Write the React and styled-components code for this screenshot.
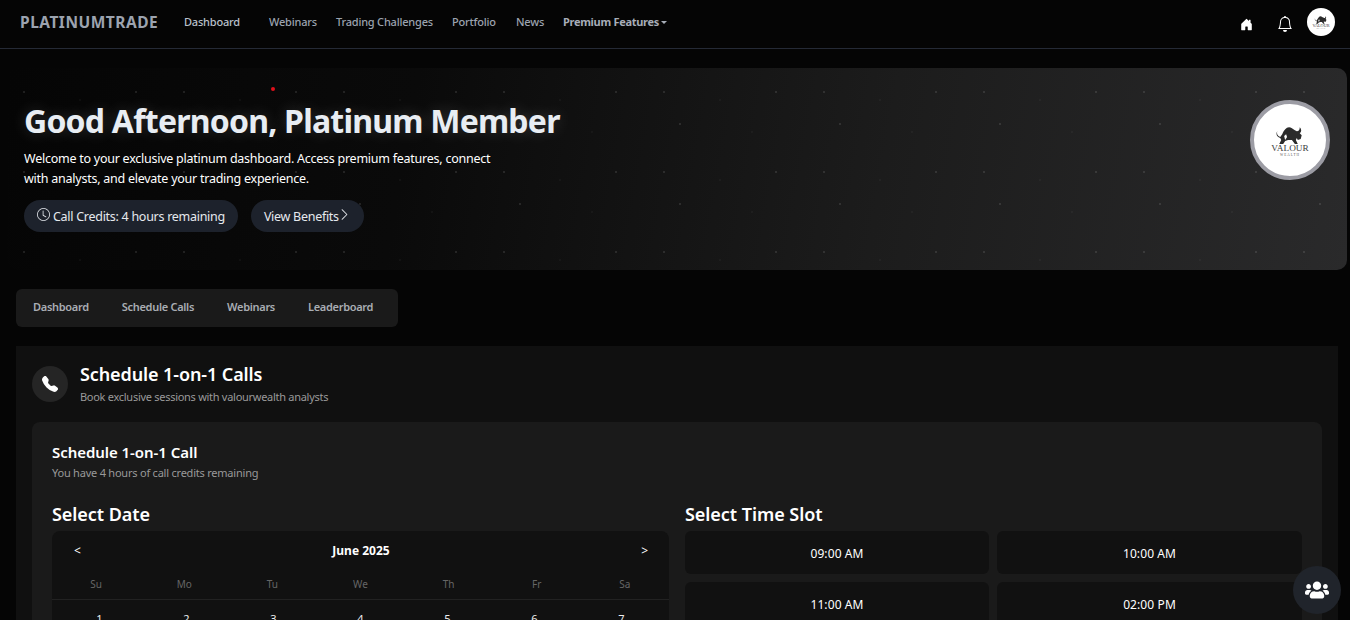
import styled, { createGlobalStyle } from "styled-components";
import { BsHouseDoorFill, BsBell, BsClock, BsChevronRight, BsTelephoneFill } from "react-icons/bs";
import { FaUsers } from "react-icons/fa";

const navLinks = [
  { label: "Dashboard", width: 85, active: true },
  { label: "Webinars", width: 67 },
  { label: "Trading Challenges", width: 116 },
  { label: "Portfolio", width: 64 },
  { label: "News", width: 47 },
];

const tabs = ["Dashboard", "Schedule Calls", "Webinars", "Leaderboard"];
const weekdays = ["Su", "Mo", "Tu", "We", "Th", "Fr", "Sa"];
const days = Array.from({ length: 14 }, (_, i) => i + 1);
const slots = ["09:00 AM", "10:00 AM", "11:00 AM", "02:00 PM"];

// bull + wordmark, used big in the hero and small in the navbar
const BullLogo = ({ size }) => (
  <svg width={size} height={size} viewBox="0 0 80 80" style={{ flex: "none" }}>
    <path
      fill="#2b2b2b"
      d="M27 31C26 33 27 36 30 37L32 34C34 30 36 27 39 27C41 27 43 29 45 30L47 31C49 31 50 30 50 27C52 29 52 32 50 33L52 35L51 39L48 40L47 38L46 40L48 44L45 44L42 40L38 40L35 41L33 44L29 44L31 40L30 38C27 37 25 34 27 31Z"
    />
    <path fill="#fff" d="M34 36l2-2 1 3-2 3z" />
    <text x="40" y="51.5" textAnchor="middle" fontFamily="Liberation Serif, serif" fontSize="9.5" fill="#3a3a3a">
      VALOUR
    </text>
    <text x="40" y="56" textAnchor="middle" fontFamily="Liberation Serif, serif" fontSize="3.5" letterSpacing="1" fill="#555">
      WEALTH
    </text>
  </svg>
);

const App = () => {
  return (
    <Page>
      <GlobalStyle />
      <Navbar>
        <Brand>PLATINUMTRADE</Brand>
        <NavLinks>
          {navLinks.map((link) => (
            <NavLink key={link.label} $width={link.width} $active={link.active}>
              {link.label}
            </NavLink>
          ))}
          <PremiumLink>Premium Features</PremiumLink>
        </NavLinks>
        <NavIcons>
          <HomeIcon><BsHouseDoorFill /></HomeIcon>
          <BellIcon><BsBell /></BellIcon>
          <Avatar><BullLogo size={36} /></Avatar>
        </NavIcons>
      </Navbar>

      <Hero>
        <RedDot />
        <HeroText>
          <HeroTitle>Good Afternoon, Platinum Member</HeroTitle>
          <HeroLead>
            Welcome to your exclusive platinum dashboard. Access premium features, connect with analysts, and elevate your trading experience.
          </HeroLead>
          <HeroActions>
            <Pill>
              <BsClock />
              <span>Call Credits: 4 hours remaining</span>
            </Pill>
            <Pill>
              <span>View Benefits</span>
              <BsChevronRight />
            </Pill>
          </HeroActions>
        </HeroText>
        <HeroLogo><BullLogo size={78} /></HeroLogo>
      </Hero>

      <Tabs>
        {tabs.map((tab) => (
          <Tab key={tab}>{tab}</Tab>
        ))}
      </Tabs>

      <Section>
        <SectionHead>
          <PhoneBadge><BsTelephoneFill /></PhoneBadge>
          <div>
            <SectionTitle>Schedule 1-on-1 Calls</SectionTitle>
            <SectionSub>Book exclusive sessions with valourwealth analysts</SectionSub>
          </div>
        </SectionHead>

        <Card>
          <CardTitle>Schedule 1-on-1 Call</CardTitle>
          <CardSub>You have 4 hours of call credits remaining</CardSub>
          <Columns>
            <div>
              <ColumnTitle>Select Date</ColumnTitle>
              <Calendar>
                <CalendarHead>
                  <MonthArrow>&lt;</MonthArrow>
                  <MonthName>June 2025</MonthName>
                  <MonthArrow>&gt;</MonthArrow>
                </CalendarHead>
                <Weekdays>
                  {weekdays.map((d) => (
                    <Weekday key={d}>{d}</Weekday>
                  ))}
                </Weekdays>
                <Days>
                  {days.map((d) => (
                    <Day key={d}>{d}</Day>
                  ))}
                </Days>
              </Calendar>
            </div>
            <div>
              <ColumnTitle>Select Time Slot</ColumnTitle>
              <Slots>
                {slots.map((s) => (
                  <Slot key={s}>{s}</Slot>
                ))}
              </Slots>
            </div>
          </Columns>
        </Card>
      </Section>

      <ChatButton><FaUsers /></ChatButton>
    </Page>
  );
};

export default App;

const GlobalStyle = createGlobalStyle`
  html, body {
    margin: 0;
    height: 620px;
    overflow: hidden;
    background: #050505;
  }
  * {
    box-sizing: border-box;
  }
`;

const Page = styled.div`
  font-family: "Noto Sans", "Open Sans", sans-serif;
  color: #fff;
  height: 620px;
  overflow: hidden;
`;

const Navbar = styled.nav`
  display: flex;
  align-items: center;
  height: 49px;
  padding: 0 15px 5px 20px;
  background: #050505;
  border-bottom: 1px solid #252a36;
`;

const Brand = styled.div`
  width: 164px;
  font-size: 15.5px;
  font-weight: 700;
  letter-spacing: 0.5px;
  color: #9ca3af;
`;

const NavLinks = styled.div`
  display: flex;
  align-items: center;
`;

const NavLink = styled.a`
  width: ${(props) => props.$width}px;
  font-size: 11px;
  font-weight: 500;
  letter-spacing: -0.2px;
  color: ${(props) => (props.$active ? "#b9c0cb" : "#9ca3af")};
`;

const PremiumLink = styled.a`
  font-size: 11px;
  font-weight: 700;
  letter-spacing: -0.3px;
  color: #a7adb8;

  &::after {
    content: "";
    display: inline-block;
    margin-left: 2px;
    vertical-align: 2px;
    border-top: 3px solid #a7adb8;
    border-left: 3px solid transparent;
    border-right: 3px solid transparent;
  }
`;

const NavIcons = styled.div`
  display: flex;
  align-items: center;
  margin-left: auto;
`;

const HomeIcon = styled.span`
  display: flex;
  margin-top: 6px;
  margin-right: 24px;
  font-size: 13px;
  color: #fff;
`;

const BellIcon = styled.span`
  display: flex;
  margin-top: 5px;
  margin-right: 14px;
  font-size: 16px;
  color: #fff;
`;

const Avatar = styled.div`
  display: flex;
  align-items: center;
  justify-content: center;
  width: 28px;
  height: 28px;
  border-radius: 50%;
  background: #fff;
  overflow: hidden;
`;

const Hero = styled.section`
  position: relative;
  display: flex;
  justify-content: space-between;
  height: 202px;
  margin: 19px 3px 0 7px;
  padding: 32px 17px 0 17px;
  border-radius: 10px;
  background-color: #0a0a0a;
  background-image:
    radial-gradient(circle at 16px 24px, rgba(255, 255, 255, 0.1) 0.9px, transparent 1px),
    radial-gradient(circle at 128px 24px, rgba(255, 255, 255, 0.1) 0.9px, transparent 1px),
    radial-gradient(circle at 32px 56px, rgba(255, 255, 255, 0.1) 0.9px, transparent 1px),
    radial-gradient(circle at 72px 32px, rgba(255, 255, 255, 0.03) 0.9px, transparent 1px),
    radial-gradient(circle at 104px 64px, rgba(255, 255, 255, 0.03) 0.9px, transparent 1px),
    linear-gradient(100deg, #050505 0%, #0a0a0a 30%, #1c1c1c 65%, #2a2a2b 100%);
  background-size: 160px 80px, 160px 80px, 160px 80px, 160px 80px, 160px 80px, 100% 100%;
  background-position: 1px 0, 1px 0, 1px 0, 1px 0, 1px 0, 0 0;
`;

const RedDot = styled.span`
  position: absolute;
  left: 264px;
  top: 19px;
  width: 4px;
  height: 4px;
  border-radius: 50%;
  background: #e0101a;
`;

const HeroText = styled.div`
  width: 540px;
`;

const HeroTitle = styled.h1`
  margin: 0;
  font-size: 32px;
  line-height: 42px;
  font-weight: 700;
  letter-spacing: -0.78px;
  color: #e8edf3;
  text-shadow: 0 0 16px rgba(255, 255, 255, 0.18);
  white-space: nowrap;
`;

const HeroLead = styled.p`
  width: 480px;
  margin: 7px 0 0;
  font-size: 12.5px;
  line-height: 20px;
  letter-spacing: -0.25px;
  color: #fff;
`;

const HeroActions = styled.div`
  display: flex;
  gap: 13px;
  margin-top: 11px;
`;

const Pill = styled.div`
  display: flex;
  align-items: center;
  gap: 3px;
  height: 32px;
  padding: 0 13px;
  border-radius: 16px;
  background: #1d222c;
  font-size: 12.5px;
  letter-spacing: -0.28px;
  color: #e6e9ee;

  svg {
    margin-top: -3px;
    font-size: 13px;
  }

  span + svg {
    margin-left: -4px;
  }
`;

const HeroLogo = styled.div`
  display: flex;
  align-items: center;
  justify-content: center;
  align-self: flex-start;
  width: 80px;
  height: 80px;
  border: 4px solid #9c9ca4;
  border-radius: 50%;
  background: #fff;
`;

const Tabs = styled.div`
  display: flex;
  width: 382px;
  height: 38px;
  margin: 19px 0 0 16px;
  padding: 0 0 3px 17px;
  align-items: center;
  border-radius: 6px;
  background: #1a1a1a;
`;

const Tab = styled.div`
  margin-right: 33px;
  font-size: 11px;
  font-weight: 600;
  letter-spacing: -0.3px;
  white-space: nowrap;
  color: #a9adb3;
`;

const Section = styled.section`
  margin: 19px 12px 0 16px;
  padding: 20px 16px;
  background: #101010;
`;

const SectionHead = styled.div`
  display: flex;
  align-items: center;
  gap: 12px;
  height: 36px;
`;

const PhoneBadge = styled.div`
  display: flex;
  align-items: center;
  justify-content: center;
  width: 36px;
  height: 36px;
  border-radius: 50%;
  background: #252525;
  font-size: 16px;
`;

const SectionTitle = styled.h2`
  margin: -2px 0 0;
  font-size: 18px;
  line-height: 22px;
  font-weight: 600;
  letter-spacing: -0.1px;
`;

const SectionSub = styled.p`
  margin: 5px 0 0;
  font-size: 11px;
  line-height: 14px;
  letter-spacing: -0.28px;
  color: #9a9a9a;
`;

const Card = styled.div`
  margin-top: 20px;
  padding: 20px;
  border-radius: 8px;
  background: #1a1a1a;
`;

const CardTitle = styled.h3`
  margin: 0;
  font-size: 15px;
  line-height: 20px;
  font-weight: 600;
  letter-spacing: -0.05px;
`;

const CardSub = styled.p`
  margin: 4px 0 0;
  font-size: 11px;
  line-height: 14px;
  letter-spacing: -0.22px;
  color: #999;
`;

const Columns = styled.div`
  display: grid;
  grid-template-columns: 617px 617px;
  gap: 16px;
  margin-top: 22px;
`;

const ColumnTitle = styled.h4`
  margin: 0;
  font-size: 18px;
  line-height: 24px;
  font-weight: 600;
  letter-spacing: -0.05px;
`;

const Calendar = styled.div`
  margin-top: 5px;
  border-radius: 8px;
  background: #111;
`;

const CalendarHead = styled.div`
  display: flex;
  align-items: center;
  justify-content: space-between;
  height: 38px;
  padding: 0 21px 0 22px;
`;

const MonthArrow = styled.span`
  font-size: 12px;
  color: #fff;
`;

const MonthName = styled.span`
  font-size: 12px;
  font-weight: 700;
`;

const Weekdays = styled.div`
  display: grid;
  grid-template-columns: repeat(7, 1fr);
  align-items: center;
  height: 31px;
  border-bottom: 1px solid #222;
`;

const Weekday = styled.span`
  text-align: center;
  font-size: 10px;
  color: #666;
`;

const Days = styled.div`
  display: grid;
  grid-template-columns: repeat(7, 1fr);
  padding: 12px 4px 0;
  row-gap: 20px;
`;

const Day = styled.span`
  text-align: center;
  font-size: 11px;
  line-height: 14px;
  color: #eee;
`;

const Slots = styled.div`
  display: grid;
  grid-template-columns: 304px 305px;
  gap: 8px;
  margin-top: 5px;
`;

const Slot = styled.div`
  display: flex;
  align-items: center;
  justify-content: center;
  height: 43px;
  padding-top: 2px;
  border-radius: 6px;
  background: #111;
  font-size: 12px;
  letter-spacing: 0.1px;
  color: #fff;
`;

const ChatButton = styled.div`
  position: fixed;
  right: 9px;
  bottom: 6px;
  display: flex;
  align-items: center;
  justify-content: center;
  width: 48px;
  height: 48px;
  border-radius: 50%;
  background: #20242b;
  font-size: 24px;
  color: #fff;
`;
